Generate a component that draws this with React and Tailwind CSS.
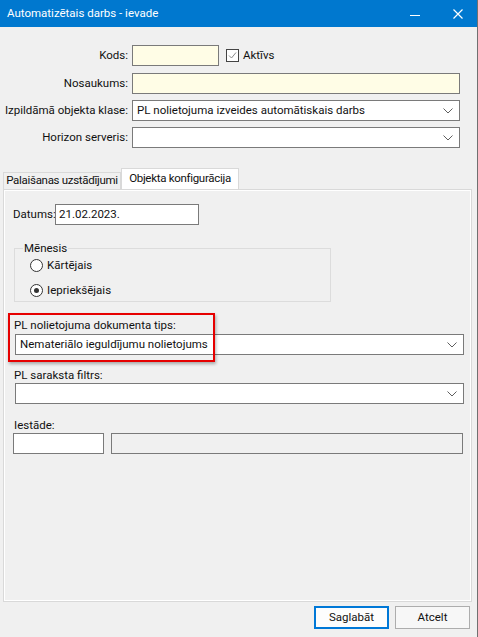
import React from 'react';

const font = { fontFamily: 'Roboto, "Liberation Sans", sans-serif' };

function Chevron() {
    return (
        <svg width="10" height="6" viewBox="0 0 10 6" className="shrink-0">
            <path d="M0.5 0.5 L5 5 L9.5 0.5" fill="none" stroke="#5f5f5f" strokeWidth="1" />
        </svg>
    );
}

function ComboBox({ value, className = '' }) {
    return (
        <div className={`flex items-center justify-between bg-white border border-[#7a7a7a] pl-[4px] pr-[6px] h-[21px] ${className}`}>
            <span className="truncate">{value}</span>
            <Chevron />
        </div>
    );
}

function Radio({ checked, label }) {
    return (
        <div className="flex items-center gap-[4px] h-[15px]">
            <span className="w-[13px] h-[13px] rounded-full border border-[#333] bg-white flex items-center justify-center">
                {checked && <span className="w-[5px] h-[5px] rounded-full bg-[#333]" />}
            </span>
            <span>{label}</span>
        </div>
    );
}

function FormRow({ label, children, className = '' }) {
    return (
        <div className={`flex items-center h-[21px] ${className}`}>
            <span className="w-[132px] text-right pr-[4px] shrink-0 whitespace-nowrap">{label}</span>
            <div className="flex-1 flex items-center pr-[17px]">{children}</div>
        </div>
    );
}

export default function App() {
    return (
        <div
            className="relative w-[478px] h-[637px] bg-[#f0f0f0] border-r border-[#707070] flex flex-col text-[11.5px] text-[#111] overflow-hidden"
            style={font}
        >
            {/* title bar */}
            <div className="h-[27px] bg-[#0078cf] flex items-center pl-[7px] text-white shrink-0">
                <span className="flex-1 text-[11.5px]">Automatizētais darbs - ievade</span>
                <svg width="10" height="10" viewBox="0 0 10 10" className="mr-[33px]">
                    <path d="M0 6.5 H10" stroke="white" strokeWidth="1" />
                </svg>
                <svg width="10" height="10" viewBox="0 0 10 10" className="mr-[14px]">
                    <path d="M0.5 0.5 L9.5 9.5 M9.5 0.5 L0.5 9.5" stroke="white" strokeWidth="1.2" />
                </svg>
            </div>

            {/* header fields */}
            <div className="pt-[18px] flex flex-col">
                <FormRow label="Kods:">
                    <div className="w-[87px] h-[21px] bg-[#fffde6] border border-[#7a7a7a]" />
                    <span className="ml-[7px] w-[13px] h-[13px] border border-[#444] bg-white flex items-center justify-center">
                        <svg width="11" height="11" viewBox="0 0 11 11">
                            <path d="M2 5.5 L4.5 8 L9 2.5" fill="none" stroke="#8a8a8a" strokeWidth="1" />
                        </svg>
                    </span>
                    <span className="ml-[4px]">Aktīvs</span>
                </FormRow>
                <FormRow label="Nosaukums:" className="mt-[7px]">
                    <div className="flex-1 h-[21px] bg-[#fffde6] border border-[#7a7a7a]" />
                </FormRow>
                <FormRow label="Izpildāmā objekta klase:" className="mt-[6px]">
                    <ComboBox value="PL nolietojuma izveides automātiskais darbs" className="flex-1" />
                </FormRow>
                <FormRow label="Horizon serveris:" className="mt-[6px]">
                    <ComboBox value="" className="flex-1" />
                </FormRow>
            </div>

            {/* tabs */}
            <div className="mt-[20px] ml-[3px] flex items-end h-[21px] tracking-[-0.3px]">
                <div className="w-[118px] h-[17px] border border-b-0 border-[#d9d9d9] bg-[#f0f0f0] flex items-center justify-center whitespace-nowrap">
                    Palaišanas uzstādījumi
                </div>
                <div className="w-[118px] h-[21px] border border-b-0 border-[#d9d9d9] bg-white flex items-center justify-center whitespace-nowrap">
                    Objekta konfigurācija
                </div>
            </div>

            {/* tab page */}
            <div className="ml-[3px] w-[469px] h-[413px] border border-[#d9d9d9]">
                <div className="h-full border border-white pl-[8px] pr-[6px] pt-[13px] flex flex-col">
                    <div className="flex items-center h-[21px]">
                        <span className="w-[42px] shrink-0 whitespace-nowrap">Datums:</span>
                        <div className="w-[144px] h-[21px] bg-white border border-[#7a7a7a] px-[3px] flex items-center">
                            21.02.2023.
                        </div>
                    </div>

                    <fieldset className="mt-[17px] ml-[1px] w-[317px] h-[60px] border border-[#dcdcdc] px-[15px]">
                        <legend className="-ml-[7px] leading-[12px] px-[1px]">Mēnesis</legend>
                        <div className="mt-[4px] flex flex-col gap-[10px]">
                            <Radio label="Kārtējais" />
                            <Radio checked label="Iepriekšējais" />
                        </div>
                    </fieldset>

                    <div className="mt-[15px] pl-[1px] leading-[16px]">PL nolietojuma dokumenta tips:</div>
                    <ComboBox value="Nemateriālo ieguldījumu nolietojums" className="ml-[2px] mt-[1px]" />

                    <div className="mt-[12px] pl-[1px] leading-[16px]">PL saraksta filtrs:</div>
                    <ComboBox value="" className="ml-[2px]" />

                    <div className="mt-[13px] pl-[1px] leading-[16px]">Iestāde:</div>
                    <div className="flex items-center pr-[1px]">
                        <div className="w-[91px] h-[21px] bg-white border border-[#7a7a7a]" />
                        <div className="ml-[7px] flex-1 h-[21px] bg-[#f0f0f0] border border-[#7a7a7a]" />
                    </div>
                </div>
            </div>

            {/* buttons */}
            <div className="flex justify-end gap-[6px] pr-[7px] pt-[4px]">
                <button className="w-[75px] h-[23px] bg-[#fdfdfd] border-2 border-[#0078d7] text-[11.5px] text-[#111]">
                    Saglabāt
                </button>
                <button className="w-[75px] h-[23px] bg-[#f7f7f7] border border-[#adadad] text-[11.5px] text-[#111]">
                    Atcelt
                </button>
            </div>

            {/* highlight marker */}
            <div className="absolute left-[8px] top-[313px] w-[207px] h-[49px] border-2 border-[#e60000] shadow-[1px_2px_3px_rgba(0,0,0,0.3)] pointer-events-none" />
        </div>
    );
}
